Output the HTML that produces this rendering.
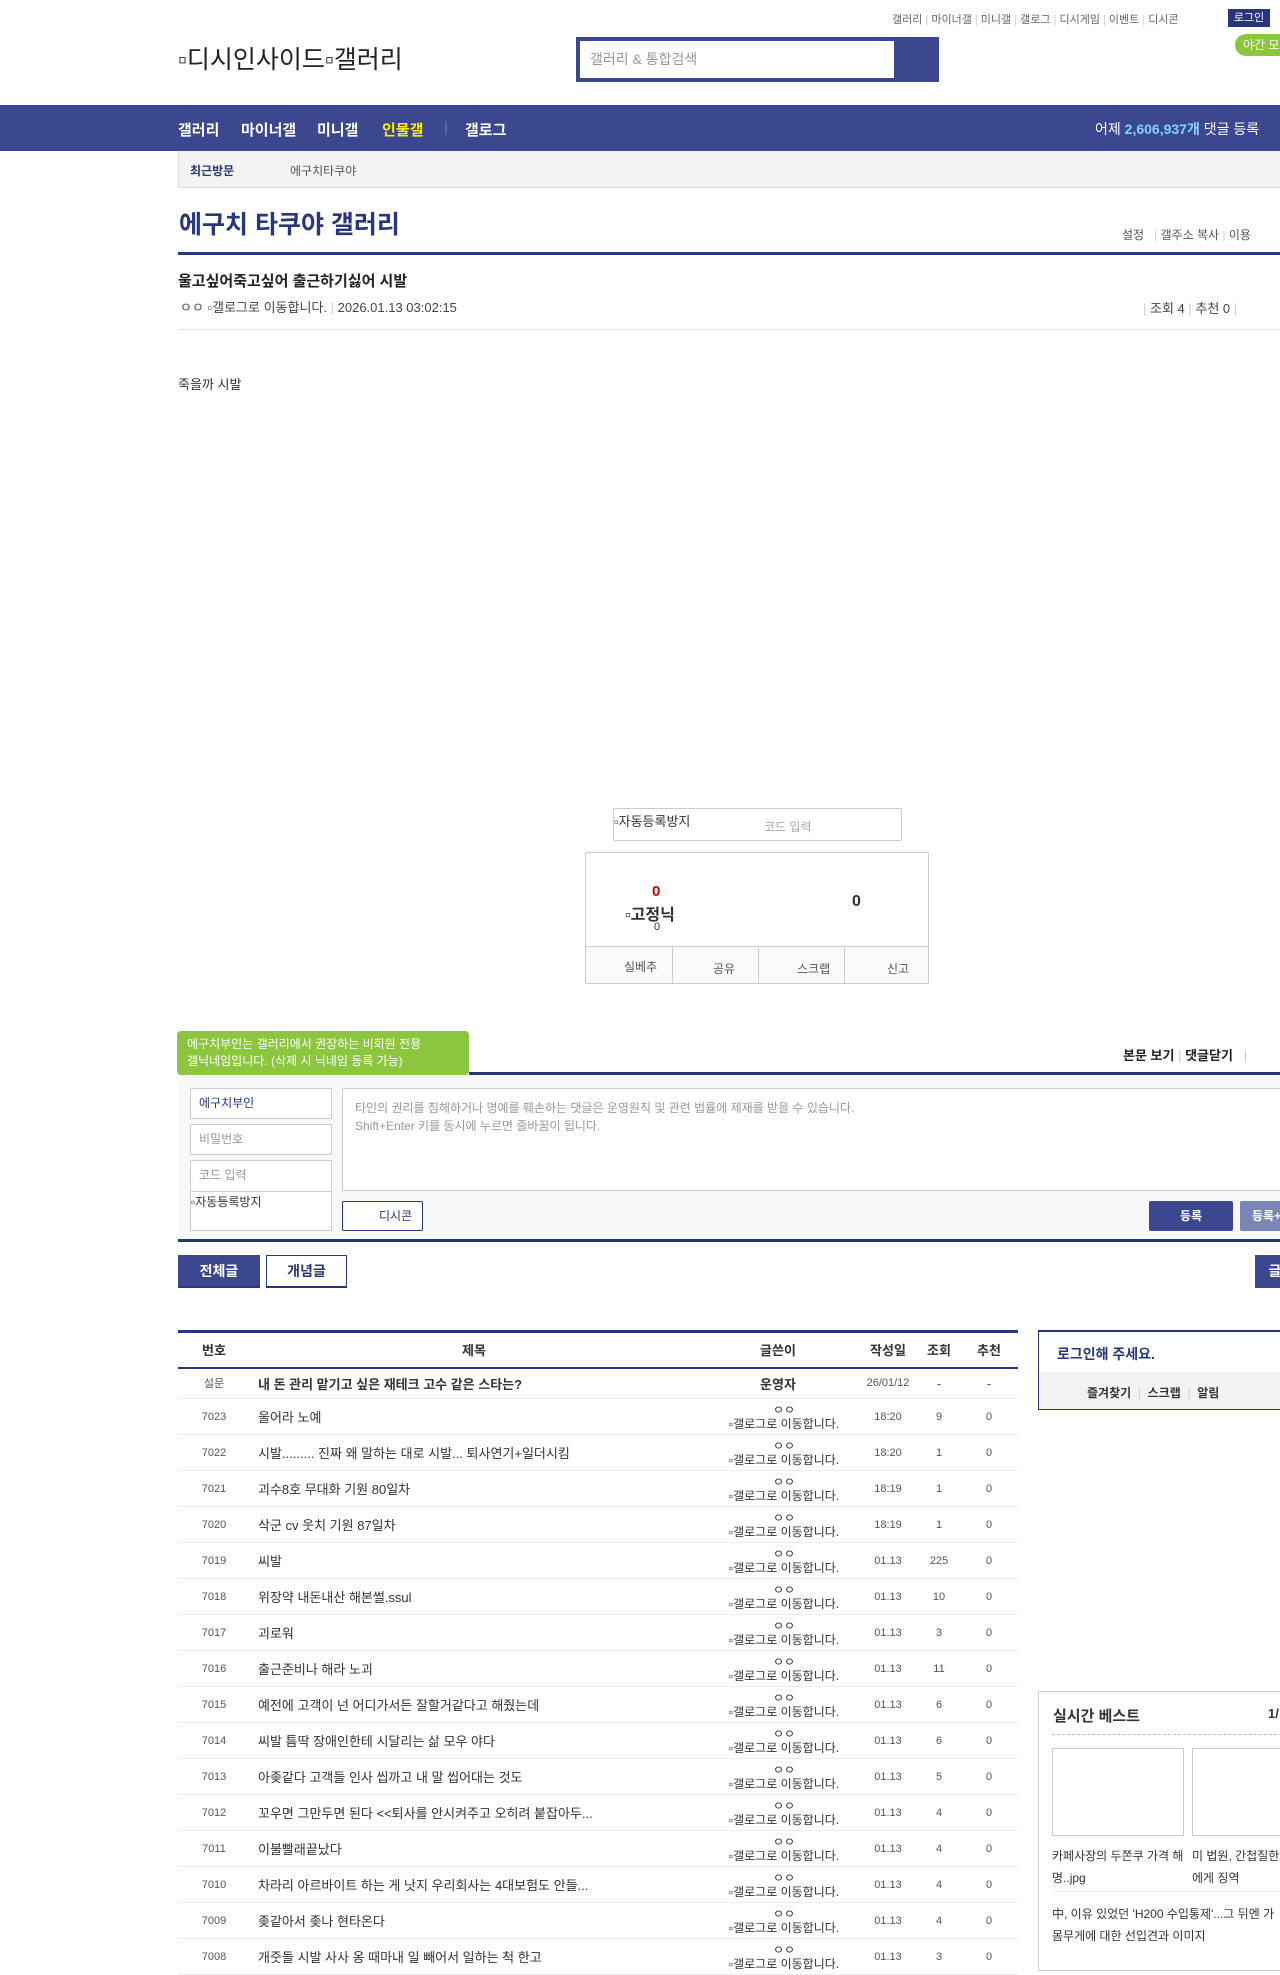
<!DOCTYPE html>
<html><head><meta charset="utf-8">
<style>
*{margin:0;padding:0;box-sizing:border-box}
body{width:1280px;height:1956px;overflow:hidden;background:#fff;font-family:"Liberation Sans","Noto Sans CJK KR",sans-serif;color:#333;position:relative;font-size:13px}
.a{position:absolute;white-space:nowrap}
.nav{left:0;top:105px;width:1280px;height:46px;background:#3b4890}
.nav span{position:absolute;top:14px;color:#fff;font-weight:bold;font-size:15px}
.navy{background:#29367c}
table{border-collapse:collapse;position:absolute;left:178px;top:1330px;width:840px;border-top:3px solid #29367c;font-size:13px}
th{height:36px;font-weight:bold;font-size:13px;color:#333;border-bottom:2px solid #29367c}
td{height:36px;border-bottom:1px solid #eee;text-align:center;color:#555}
td.t{text-align:left;color:#333;padding-left:8px}
td.w{font-size:12px;line-height:14px;color:#333;padding-left:12px}
tr.s td{height:31px}
.btn{position:absolute;text-align:center;font-weight:bold;font-size:14px}
</style></head><body>
<div class="a" style="left:892px;top:11px;font-size:11px;color:#666;">갤러리 <span style="color:#ccc">|</span> 마이너갤 <span style="color:#ccc">|</span> 미니갤 <span style="color:#ccc">|</span> 갤로그 <span style="color:#ccc">|</span> 디시게임 <span style="color:#ccc">|</span> 이벤트 <span style="color:#ccc">|</span> 디시콘</div>
<div class="a" style="left:1228px;top:9px;width:42px;height:18px;background:#29367c;color:#fff;font-size:11px;text-align:center;line-height:18px">로그인</div>
<div class="a" style="left:1235px;top:34px;width:60px;height:22px;background:#8cc63f;border-radius:11px;color:#fff;font-size:12px;line-height:22px;padding-left:8px">야간 모드</div>
<div class="a" style="left:178px;top:40px;font-size:25px;color:#222;">▫디시인사이드▫갤러리</div>
<div class="a" style="left:576px;top:37px;width:363px;height:45px;background:#3b4890"></div>
<div class="a" style="left:580px;top:41px;width:314px;height:37px;background:#fff;color:#999;font-size:14px;line-height:37px;padding-left:10px">갤러리 &amp; 통합검색</div>
<div class="a nav"><span style="left:178px">갤러리</span><span style="left:241px">마이너갤</span><span style="left:317px">미니갤</span><span style="left:382px;color:#ffea00">인물갤</span><span style="left:444px;color:#6a75b0;font-weight:normal">|</span><span style="left:465px">갤로그</span><span style="left:1095px;font-weight:normal;font-size:14px">어제 <b style="color:#7fd4ff">2,606,937개</b> 댓글 등록</span></div>
<div class="a" style="left:178px;top:151px;width:1102px;height:37px;background:#f3f3f3;border-bottom:1px solid #ddd;border-left:1px solid #ddd"></div>
<div class="a" style="left:190px;top:162px;font-size:12px;font-weight:bold;color:#29367c">최근방문</div>
<div class="a" style="left:290px;top:162px;font-size:12px;color:#555">에구치타쿠야</div>
<div class="a" style="left:179px;top:205px;font-size:25px;font-weight:bold;color:#29367c">에구치 타쿠야 갤러리</div>
<div class="a" style="left:1122px;top:226px;font-size:12px;color:#555">설정 &nbsp; <span style="color:#ccc">|</span> 갤주소 복사 <span style="color:#ccc">|</span> 이용</div>
<div class="a navy" style="left:178px;top:252px;width:1102px;height:3px"></div>
<div class="a" style="left:178px;top:270px;font-size:15px;font-weight:bold;color:#222">울고싶어죽고싶어 출근하기싫어 시발</div>
<div class="a" style="left:180px;top:297px;font-size:13px;color:#444">ㅇㅇ ▫갤로그로 이동합니다. <span style="color:#ccc">|</span> 2026.01.13 03:02:15</div>
<div class="a" style="left:1143px;top:298px;font-size:13px;color:#444"><span style="color:#ccc">|</span> 조회 4 <span style="color:#ccc">|</span> 추천 0 <span style="color:#ccc">|</span></div>
<div class="a" style="left:178px;top:329px;width:1102px;height:1px;background:#e5e5e5"></div>
<div class="a" style="left:178px;top:374px;font-size:13px;color:#333">죽을까 시발</div>
<div class="a" style="left:613px;top:808px;width:289px;height:33px;border:1px solid #ccc;border-radius:2px"></div>
<div class="a" style="left:614px;top:811px;font-size:13px">▫자동등록방지</div>
<div class="a" style="left:764px;top:818px;font-size:12px;color:#aaa">코드 입력</div>
<div class="a" style="left:585px;top:852px;width:344px;height:132px;border:1px solid #ccc;border-radius:2px"></div>
<div class="a" style="left:652px;top:883px;font-size:15px;font-weight:bold;color:#c00">0</div>
<div class="a" style="left:625px;top:901px;font-size:16px;font-weight:bold;color:#333">▫고정닉</div>
<div class="a" style="left:654px;top:921px;font-size:11px;color:#29367c">0</div>
<div class="a" style="left:852px;top:893px;font-size:16px;font-weight:bold;color:#333">0</div>
<div class="a" style="left:586px;top:946px;width:342px;height:37px;background:#fafafa;border-top:1px solid #ccc"></div>
<div class="a" style="left:672px;top:947px;width:1px;height:37px;background:#ccc"></div>
<div class="a" style="left:758px;top:947px;width:1px;height:37px;background:#ccc"></div>
<div class="a" style="left:844px;top:947px;width:1px;height:37px;background:#ccc"></div>
<div class="a" style="left:624px;top:958px;font-size:12px;color:#555">실베추</div>
<div class="a" style="left:713px;top:960px;font-size:12px;color:#555">공유</div>
<div class="a" style="left:797px;top:960px;font-size:12px;color:#555">스크랩</div>
<div class="a" style="left:887px;top:960px;font-size:12px;color:#555">신고</div>
<div class="a" style="left:177px;top:1031px;width:292px;height:44px;background:#8cc63f;border-radius:4px;color:#fff;font-size:12px;line-height:17px;padding:5px 10px">에구치부인는 갤러리에서 권장하는 비회원 전용<br>갤닉네임입니다. (삭제 시 닉네임 등록 가능)</div>
<div class="a" style="left:211px;top:1075px;width:0;height:0;border-left:5px solid transparent;border-right:5px solid transparent;border-top:8px solid #8cc63f"></div>
<div class="a" style="left:1123px;top:1045px;font-size:13px;font-weight:bold;color:#222">본문 보기 <span style="color:#ccc;font-weight:normal">|</span> 댓글닫기 &nbsp; <span style="color:#ccc;font-weight:normal">|</span></div>
<div class="a navy" style="left:469px;top:1072px;width:811px;height:3px"></div>
<div class="a" style="left:178px;top:1075px;width:1102px;height:165px;background:#f8f8f8"></div>
<div class="a" style="left:190px;top:1088px;width:142px;height:31px;border:1px solid #ccc;background:#fff;color:#29367c;font-size:12px;line-height:29px;padding-left:8px">에구치부인</div>
<div class="a" style="left:190px;top:1124px;width:142px;height:31px;border:1px solid #ccc;background:#fff;color:#999;font-size:12px;line-height:29px;padding-left:8px">비밀번호</div>
<div class="a" style="left:190px;top:1160px;width:142px;height:71px;border:1px solid #ccc;background:#fff;color:#999;font-size:12px;line-height:29px;padding-left:8px">코드 입력</div>
<div class="a" style="left:191px;top:1191px;width:140px;height:1px;background:#ccc"></div>
<div class="a" style="left:191px;top:1193px;font-size:12px;color:#333">▫자동등록방지</div>
<div class="a" style="left:342px;top:1088px;width:940px;height:103px;border:1px solid #ccc;background:#fff;color:#999;font-size:12px;line-height:18px;padding:10px 12px">타인의 권리를 침해하거나 명예를 훼손하는 댓글은 운영원칙 및 관련 법률에 제재를 받을 수 있습니다.<br>Shift+Enter 키를 동시에 누르면 줄바꿈이 됩니다.</div>
<div class="a" style="left:342px;top:1201px;width:81px;height:30px;border:1px solid #29367c;border-radius:2px;background:#fff;color:#29367c;font-size:12px;line-height:28px;padding-left:36px">디시콘</div>
<div class="a" style="left:1149px;top:1201px;width:84px;height:30px;background:#3b4890;border-radius:2px;color:#fff;font-size:12px;font-weight:bold;line-height:30px;text-align:center">등록</div>
<div class="a" style="left:1240px;top:1201px;width:60px;height:30px;background:#7c85b8;border-radius:2px;color:#fff;font-size:12px;font-weight:bold;line-height:30px;padding-left:12px">등록+</div>
<div class="a navy" style="left:178px;top:1239px;width:1102px;height:3px"></div>
<div class="btn" style="left:178px;top:1255px;width:82px;height:33px;background:#3b4890;color:#fff;line-height:33px;border-bottom:2px solid #29367c">전체글</div>
<div class="btn" style="left:266px;top:1255px;width:81px;height:33px;background:#fff;color:#29367c;border:1px solid #29367c;border-bottom:2px solid #29367c;line-height:31px">개념글</div>
<div class="btn" style="left:1255px;top:1255px;width:40px;height:33px;background:#3b4890;color:#fff;line-height:33px">글</div>
<table>
<tr><th style="width:72px">번호</th><th>제목</th><th style="width:160px">글쓴이</th><th style="width:60px">작성일</th><th style="width:42px">조회</th><th style="width:58px">추천</th></tr>
<tr class="s"><td style="font-size:11px">설문</td><td class="t" style="font-weight:bold">내 돈 관리 맡기고 싶은 재테크 고수 같은 스타는?</td><td style="font-weight:bold;color:#333">운영자</td><td style="font-size:11px">26/01/12</td><td>-</td><td>-</td></tr>
<tr><td style="font-size:11px">7023</td><td class="t">울어라 노예</td><td class="w">ㅇㅇ<br>▫갤로그로 이동합니다.</td><td style="font-size:11px">18:20</td><td style="font-size:11px">9</td><td style="font-size:11px">0</td></tr>
<tr><td style="font-size:11px">7022</td><td class="t">시발......... 진짜 왜 말하는 대로 시발... 퇴사연기+일더시킴</td><td class="w">ㅇㅇ<br>▫갤로그로 이동합니다.</td><td style="font-size:11px">18:20</td><td style="font-size:11px">1</td><td style="font-size:11px">0</td></tr>
<tr><td style="font-size:11px">7021</td><td class="t">괴수8호 무대화 기원 80일차</td><td class="w">ㅇㅇ<br>▫갤로그로 이동합니다.</td><td style="font-size:11px">18:19</td><td style="font-size:11px">1</td><td style="font-size:11px">0</td></tr>
<tr><td style="font-size:11px">7020</td><td class="t">삭군 cv 웃치 기원 87일차</td><td class="w">ㅇㅇ<br>▫갤로그로 이동합니다.</td><td style="font-size:11px">18:19</td><td style="font-size:11px">1</td><td style="font-size:11px">0</td></tr>
<tr><td style="font-size:11px">7019</td><td class="t">씨발</td><td class="w">ㅇㅇ<br>▫갤로그로 이동합니다.</td><td style="font-size:11px">01.13</td><td style="font-size:11px">225</td><td style="font-size:11px">0</td></tr>
<tr><td style="font-size:11px">7018</td><td class="t">위장약 내돈내산 해본썰.ssul</td><td class="w">ㅇㅇ<br>▫갤로그로 이동합니다.</td><td style="font-size:11px">01.13</td><td style="font-size:11px">10</td><td style="font-size:11px">0</td></tr>
<tr><td style="font-size:11px">7017</td><td class="t">괴로워</td><td class="w">ㅇㅇ<br>▫갤로그로 이동합니다.</td><td style="font-size:11px">01.13</td><td style="font-size:11px">3</td><td style="font-size:11px">0</td></tr>
<tr><td style="font-size:11px">7016</td><td class="t">출근준비나 해라 노괴</td><td class="w">ㅇㅇ<br>▫갤로그로 이동합니다.</td><td style="font-size:11px">01.13</td><td style="font-size:11px">11</td><td style="font-size:11px">0</td></tr>
<tr><td style="font-size:11px">7015</td><td class="t">예전에 고객이 넌 어디가서든 잘할거같다고 해줬는데</td><td class="w">ㅇㅇ<br>▫갤로그로 이동합니다.</td><td style="font-size:11px">01.13</td><td style="font-size:11px">6</td><td style="font-size:11px">0</td></tr>
<tr><td style="font-size:11px">7014</td><td class="t">씨발 틈딱 장애인한테 시달리는 삶 모우 야다</td><td class="w">ㅇㅇ<br>▫갤로그로 이동합니다.</td><td style="font-size:11px">01.13</td><td style="font-size:11px">6</td><td style="font-size:11px">0</td></tr>
<tr><td style="font-size:11px">7013</td><td class="t">아좆같다 고객들 인사 씹까고 내 말 씹어대는 것도</td><td class="w">ㅇㅇ<br>▫갤로그로 이동합니다.</td><td style="font-size:11px">01.13</td><td style="font-size:11px">5</td><td style="font-size:11px">0</td></tr>
<tr><td style="font-size:11px">7012</td><td class="t">꼬우면 그만두면 된다 &lt;&lt;퇴사를 안시켜주고 오히려 붙잡아두...</td><td class="w">ㅇㅇ<br>▫갤로그로 이동합니다.</td><td style="font-size:11px">01.13</td><td style="font-size:11px">4</td><td style="font-size:11px">0</td></tr>
<tr><td style="font-size:11px">7011</td><td class="t">이불빨래끝났다</td><td class="w">ㅇㅇ<br>▫갤로그로 이동합니다.</td><td style="font-size:11px">01.13</td><td style="font-size:11px">4</td><td style="font-size:11px">0</td></tr>
<tr><td style="font-size:11px">7010</td><td class="t">차라리 아르바이트 하는 게 낫지 우리회사는 4대보험도 안들...</td><td class="w">ㅇㅇ<br>▫갤로그로 이동합니다.</td><td style="font-size:11px">01.13</td><td style="font-size:11px">4</td><td style="font-size:11px">0</td></tr>
<tr><td style="font-size:11px">7009</td><td class="t">좆같아서 좆나 현타온다</td><td class="w">ㅇㅇ<br>▫갤로그로 이동합니다.</td><td style="font-size:11px">01.13</td><td style="font-size:11px">4</td><td style="font-size:11px">0</td></tr>
<tr><td style="font-size:11px">7008</td><td class="t">개줏들 시발 사사 옹 때마내 일 빼어서 일하는 척 한고</td><td class="w">ㅇㅇ<br>▫갤로그로 이동합니다.</td><td style="font-size:11px">01.13</td><td style="font-size:11px">3</td><td style="font-size:11px">0</td></tr>
</table>
<div class="a" style="left:1038px;top:1330px;width:260px;height:80px;border:1px solid #29367c;border-top:2px solid #29367c"></div>
<div class="a" style="left:1057px;top:1344px;font-size:14px;font-weight:bold;color:#29367c">로그인해 주세요.</div>
<div class="a" style="left:1039px;top:1372px;width:250px;height:37px;background:#f3f3f3"></div>
<div class="a" style="left:1087px;top:1384px;font-size:12px;font-weight:bold;color:#333">즐겨찾기 &nbsp;<span style="color:#ccc;font-weight:normal">|</span>&nbsp; 스크랩 &nbsp;<span style="color:#ccc;font-weight:normal">|</span>&nbsp; 알림</div>
<div class="a" style="left:1038px;top:1691px;width:260px;height:280px;border:1px solid #ccc"></div>
<div class="a" style="left:1053px;top:1705px;font-size:15px;font-weight:bold;color:#333">실시간 베스트</div>
<div class="a" style="left:1268px;top:1706px;font-size:13px;font-weight:bold;color:#333">1/</div>
<div class="a" style="left:1052px;top:1734px;width:240px;border-top:1px dashed #bbb"></div>
<div class="a" style="left:1052px;top:1748px;width:132px;height:88px;border:1px solid #ccc"></div>
<div class="a" style="left:1192px;top:1748px;width:132px;height:88px;border:1px solid #ccc"></div>
<div class="a" style="left:1052px;top:1845px;font-size:12px;line-height:22px;color:#333;white-space:normal;width:134px">카페사장의 두쫀쿠 가격 해명..jpg</div>
<div class="a" style="left:1192px;top:1845px;font-size:12px;line-height:22px;color:#333;white-space:normal;width:134px">미 법원, 간첩질한 계 미군에게 징역</div>
<div class="a" style="left:1052px;top:1891px;width:240px;height:1px;background:#eee"></div>
<div class="a" style="left:1052px;top:1905px;font-size:12px;color:#333">中, 이유 있었던 'H200 수입통제'...그 뒤엔 가</div>
<div class="a" style="left:1052px;top:1927px;font-size:12px;color:#333">몸무게에 대한 선입견과 이미지</div>
</body></html>
